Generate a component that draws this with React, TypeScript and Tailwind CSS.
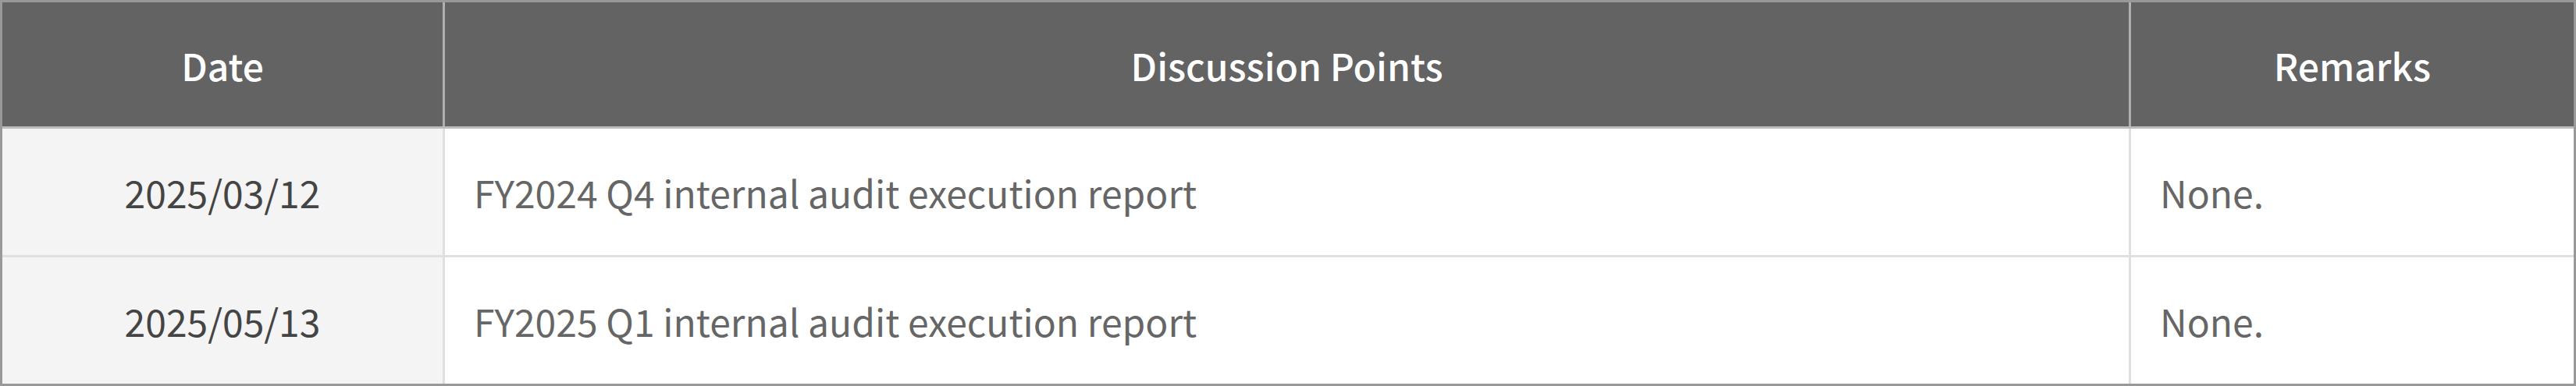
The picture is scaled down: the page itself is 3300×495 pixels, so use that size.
const rows = [
  { date: "2025/03/12", point: "FY2024 Q4 internal audit execution report", remark: "None." },
  { date: "2025/05/13", point: "FY2025 Q1 internal audit execution report", remark: "None." },
];

export default function App() {
  return (
    <div
      className="w-[3300px] h-[495px] bg-white"
      style={{ fontFamily: '"Noto Sans CJK KR", "Noto Sans", sans-serif' }}
    >
      <div className="border-[3px] border-[#999999] flex flex-col">
        {/* header */}
        <div className="flex h-[162px] bg-[#636363] border-b-[3px] border-[#bbbbbb] text-white text-[48px] font-medium">
          <div className="w-[567px] shrink-0 flex items-center justify-center border-r-[3px] border-[#b0b0b0]">
            Date
          </div>
          <div className="flex-1 flex items-center justify-center border-r-[3px] border-[#b0b0b0]">
            Discussion Points
          </div>
          <div className="w-[567px] shrink-0 flex items-center justify-center">Remarks</div>
        </div>

        {rows.map((r, i) => (
          <div
            key={r.date}
            className={
              i === 0
                ? "flex h-[165px] text-[48px] border-b-[3px] border-[#e0e0e0]"
                : "flex h-[162px] text-[48px]"
            }
          >
            <div className="w-[567px] shrink-0 flex items-center justify-center bg-[#f4f4f4] text-[#444444] border-r-[3px] border-[#e0e0e0]">
              {r.date}
            </div>
            <div className="flex-1 flex items-center pl-[37px] text-[#666666] border-r-[3px] border-[#e0e0e0]">
              {r.point}
            </div>
            <div className="w-[567px] shrink-0 flex items-center pl-[37px] text-[#666666]">{r.remark}</div>
          </div>
        ))}
      </div>
    </div>
  );
}
